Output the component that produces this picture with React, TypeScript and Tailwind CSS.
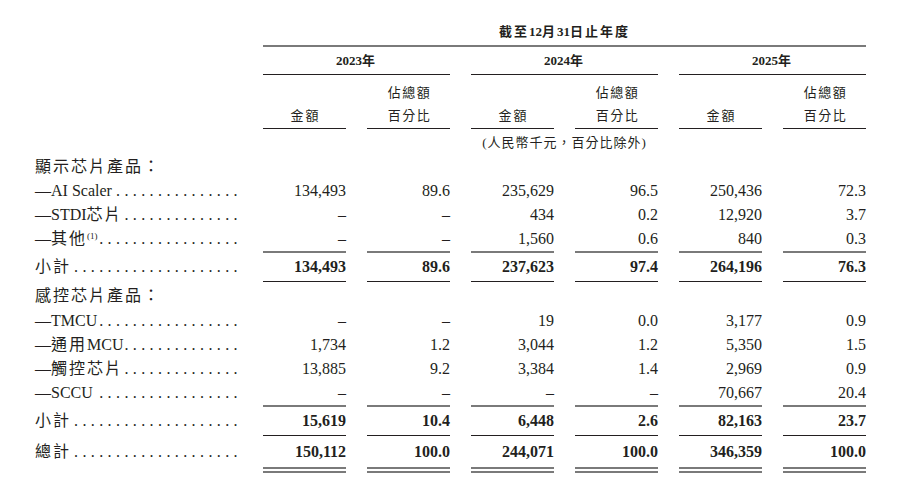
import React from "react";

const GRID = "grid grid-cols-[242px_repeat(6,83px)] gap-x-[21px]";
const FONT = "font-['Liberation_Serif','Noto_Sans_CJK_TC',serif]";

function Cjk({ children, t = "tracking-[2px]" }: { children: React.ReactNode; t?: string }) {
  return <span className={t}>{children}</span>;
}

function Label({ children, dots }: { children: React.ReactNode; dots: number }) {
  return (
    <div className="flex pl-[35px] whitespace-nowrap">
      <span className="whitespace-nowrap">{children}</span>
      <span className="flex-1 flex justify-end">
        <span className="whitespace-nowrap tracking-[4.4px]">{".".repeat(dots)}</span>
      </span>
    </div>
  );
}

function DataRow({
  label,
  vals,
  dots,
  bold = false,
  h = "h-[24px] leading-[24px]",
}: {
  label: React.ReactNode;
  vals: string[];
  dots: number;
  bold?: boolean;
  h?: string;
}) {
  return (
    <div className={`${GRID} ${h}`}>
      <Label dots={dots}>{label}</Label>
      {vals.map((v, i) => (
        <div key={i} className={`text-right ${bold ? "font-bold" : ""}`}>
          {v}
        </div>
      ))}
    </div>
  );
}

function RuleRow({ kind }: { kind: "gray" | "dark" | "double" }) {
  return (
    <div className={GRID}>
      <div />
      {[0, 1, 2, 3, 4, 5].map((i) =>
        kind === "gray" ? (
          <div key={i} className="h-[2px] bg-[#7a7a7a]" />
        ) : kind === "dark" ? (
          <div key={i} className="h-[1px] bg-[#231f20]" />
        ) : (
          <div key={i} className="h-[6px] border-t-2 border-b-2 border-[#7a7a7a]" />
        )
      )}
    </div>
  );
}

export default function App() {
  const sec1 = [
    { label: <>—AI Scaler</>, dots: 15, vals: ["134,493", "89.6", "235,629", "96.5", "250,436", "72.3"] },
    {
      label: (
        <>
          —STDI<Cjk>芯片</Cjk>
        </>
      ),
      dots: 14,
      vals: ["–", "–", "434", "0.2", "12,920", "3.7"],
    },
    {
      label: (
        <>
          —<Cjk>其他</Cjk>
          <span className="text-[9px] align-[5px] leading-none">(1)</span>
        </>
      ),
      dots: 17,
      vals: ["–", "–", "1,560", "0.6", "840", "0.3"],
    },
  ];
  const sec2 = [
    { label: <>—TMCU</>, dots: 17, vals: ["–", "–", "19", "0.0", "3,177", "0.9"] },
    {
      label: (
        <>
          —<Cjk>通用</Cjk>MCU
        </>
      ),
      dots: 14,
      vals: ["1,734", "1.2", "3,044", "1.2", "5,350", "1.5"],
    },
    {
      label: (
        <>
          —<Cjk>觸控芯片</Cjk>
        </>
      ),
      dots: 14,
      vals: ["13,885", "9.2", "3,384", "1.4", "2,969", "0.9"],
    },
    { label: <>—SCCU</>, dots: 17, vals: ["–", "–", "–", "–", "70,667", "20.4"] },
  ];

  return (
    <div className={`w-[904px] h-[496px] bg-white text-[#231f20] text-[16px] pt-[23px] ${FONT}`}>
      {/* Title */}
      <div className={`${GRID} h-[18px] leading-[18px] text-[13px] font-bold`}>
        <div />
        <div className="col-span-6 text-center">
          <Cjk>截至</Cjk>12<Cjk>月</Cjk>31<Cjk>日止年度</Cjk>
        </div>
      </div>
      <div className="h-[4px]" />
      <div className={GRID}>
        <div />
        <div className="col-span-6 h-[2px] bg-[#7a7a7a]" />
      </div>
      {/* Years */}
      <div className={`${GRID} h-[27px] leading-[27px] text-[13px] font-bold`}>
        <div />
        <div className="col-span-2 text-center">2023<Cjk>年</Cjk></div>
        <div className="col-span-2 text-center">2024<Cjk>年</Cjk></div>
        <div className="col-span-2 text-center">2025<Cjk>年</Cjk></div>
      </div>
      <div className={GRID}>
        <div />
        <div className="col-span-2 h-[1px] bg-[#231f20]" />
        <div className="col-span-2 h-[1px] bg-[#231f20]" />
        <div className="col-span-2 h-[1px] bg-[#231f20]" />
      </div>
      {/* Column headers */}
      <div className={`${GRID} h-[53px] text-[13px] leading-[23px]`}>
        <div />
        {[0, 1, 2].map((g) => (
          <React.Fragment key={g}>
            <div className="flex flex-col justify-end items-center pb-[1px] pl-[2px]">
              <span className="tracking-[2px]">金額</span>
            </div>
            <div className="flex flex-col justify-end items-center pb-[1px] pl-[2px]">
              <span className="tracking-[1.5px]">佔總額</span>
              <span className="tracking-[1.5px]">百分比</span>
            </div>
          </React.Fragment>
        ))}
      </div>
      <RuleRow kind="dark" />
      {/* Unit */}
      <div className={`${GRID} h-[26px] leading-[28px] text-[13px]`}>
        <div />
        <div />
        <div />
        <div className="col-span-2 text-center whitespace-nowrap tracking-[1px]">(人民幣千元，百分比除外)</div>
      </div>
      {/* Section 1 */}
      <div className={`${GRID} h-[24px] leading-[24px]`}>
        <div className="pl-[35px]">
          <Cjk>顯示芯片產品：</Cjk>
        </div>
      </div>
      {sec1.map((r, i) => (
        <DataRow key={i} label={r.label} vals={r.vals} dots={r.dots} />
      ))}
      <RuleRow kind="gray" />
      <DataRow
        label={<Cjk>小計</Cjk>}
        dots={20}
        vals={["134,493", "89.6", "237,623", "97.4", "264,196", "76.3"]}
        bold
        h="h-[28px] leading-[28px]"
      />
      <RuleRow kind="dark" />
      {/* Section 2 */}
      <div className={`${GRID} h-[27px] leading-[27px]`}>
        <div className="pl-[35px]">
          <Cjk>感控芯片產品：</Cjk>
        </div>
      </div>
      {sec2.map((r, i) => (
        <DataRow key={i} label={r.label} vals={r.vals} dots={r.dots} />
      ))}
      <RuleRow kind="gray" />
      <DataRow
        label={<Cjk>小計</Cjk>}
        dots={20}
        vals={["15,619", "10.4", "6,448", "2.6", "82,163", "23.7"]}
        bold
        h="h-[28px] leading-[28px]"
      />
      <RuleRow kind="dark" />
      <DataRow
        label={<Cjk>總計</Cjk>}
        dots={20}
        vals={["150,112", "100.0", "244,071", "100.0", "346,359", "100.0"]}
        bold
        h="h-[31px] leading-[31px]"
      />
      <RuleRow kind="double" />
    </div>
  );
}
